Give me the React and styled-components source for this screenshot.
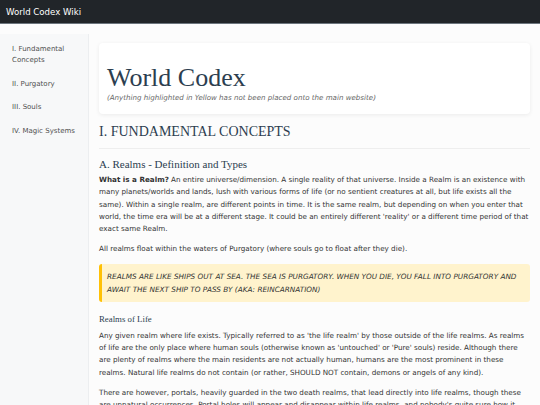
import React from "react";
import styled, { createGlobalStyle } from "styled-components";

const GlobalStyle = createGlobalStyle`
  html, body {
    margin: 0;
    padding: 0;
    background: #fcfcfc;
    font-family: "DejaVu Sans", Verdana, sans-serif;
    color: #333;
  }
`;

const Navbar = styled.header`
  height: 23px;
  background: #212529;
  border-bottom: 1px solid #6c757d;
  display: flex;
  align-items: center;
  padding: 0 6px;
  color: #fff;
  font-size: 8.6px;
`;

const Layout = styled.div`
  display: flex;
  align-items: flex-start;
`;

const Sidebar = styled.nav`
  width: 89px;
  flex-shrink: 0;
  margin-top: 10px;
  min-height: 380px;
  background: #f7f8f9;
  border-right: 1px solid #eceef0;
  padding: 10px 0 0 12px;
  box-sizing: border-box;
  display: flex;
  flex-direction: column;
  gap: 12.5px;
`;

const NavLink = styled.a`
  font-size: 7px;
  line-height: 11px;
  color: #505050;
  text-decoration: none;
  padding-right: 10px;
`;

const Main = styled.main`
  flex: 1;
  padding: 19px 10px 0 10px;
  min-width: 0;
`;

const HeaderCard = styled.div`
  background: #fff;
  border-radius: 4px;
  box-shadow: 0 1px 4px rgba(0, 0, 0, 0.07);
  padding: 20px 8px 12px;
  margin-bottom: 10px;
`;

const Title = styled.h1`
  font-family: "Liberation Serif", Georgia, serif;
  font-weight: normal;
  font-size: 26px;
  line-height: 30px;
  color: #2c3e50;
  margin: 0;
`;

const Subtitle = styled.p`
  margin: 0;
  font-size: 7.1px;
  line-height: 9px;
  font-style: italic;
  color: #666;
`;

const SectionTitle = styled.h2`
  font-family: "Liberation Serif", Georgia, serif;
  font-weight: normal;
  font-size: 14px;
  line-height: 16px;
  color: #2c3e50;
  margin: 0;
  padding-bottom: 8px;
  border-bottom: 1px solid #eee;
`;

const SubTitle = styled.h3`
  font-family: "Liberation Serif", Georgia, serif;
  font-weight: normal;
  font-size: 11px;
  line-height: 14px;
  color: #2c3e50;
  margin: 8px 0 3px;
`;

const MinorTitle = styled.h4`
  font-family: "Liberation Serif", Georgia, serif;
  font-weight: normal;
  font-size: 8.8px;
  line-height: 12px;
  color: #2c3e50;
  margin: 11px 0 5px;
`;

const Para = styled.p`
  font-size: 7.19px;
  line-height: 12.3px;
  margin: 0 0 8px;
  color: #333;
`;

const Callout = styled.blockquote`
  margin: 0;
  background: #fff3cd;
  border-left: 3px solid #ffc107;
  border-radius: 3px;
  padding: 6px 8px 6px 5px;
  font-size: 7.3px;
  line-height: 13px;
  font-style: italic;
  text-transform: uppercase;
  color: #333;
`;

export default function App() {
  return (
    <>
      <GlobalStyle />
      <Navbar>World Codex Wiki</Navbar>
      <Layout>
        <Sidebar>
          <NavLink href="#fundamental">I. Fundamental Concepts</NavLink>
          <NavLink href="#purgatory">II. Purgatory</NavLink>
          <NavLink href="#souls">III. Souls</NavLink>
          <NavLink href="#magic">IV. Magic Systems</NavLink>
        </Sidebar>
        <Main>
          <HeaderCard>
            <Title>World Codex</Title>
            <Subtitle>
              (Anything highlighted in Yellow has not been placed onto the main website)
            </Subtitle>
          </HeaderCard>
          <SectionTitle>I. FUNDAMENTAL CONCEPTS</SectionTitle>
          <SubTitle>A. Realms - Definition and Types</SubTitle>
          <Para>
            <strong>What is a Realm?</strong> An entire universe/dimension. A single
            reality of that universe. Inside a Realm is an existence with many
            planets/worlds and lands, lush with various forms of life (or no sentient
            creatures at all, but life exists all the same). Within a single realm, are
            different points in time. It is the same realm, but depending on when you
            enter that world, the time era will be at a different stage. It could be an
            entirely different 'reality' or a different time period of that exact same
            Realm.
          </Para>
          <Para>
            All realms float within the waters of Purgatory (where souls go to float
            after they die).
          </Para>
          <Callout>
            Realms are like ships out at sea. The sea is Purgatory. When you die, you
            fall into Purgatory and await the next ship to pass by (AKA: Reincarnation)
          </Callout>
          <MinorTitle>Realms of Life</MinorTitle>
          <Para>
            Any given realm where life exists. Typically referred to as 'the life realm'
            by those outside of the life realms. As realms of life are the only place
            where human souls (otherwise known as 'untouched' or 'Pure' souls) reside.
            Although there are plenty of realms where the main residents are not
            actually human, humans are the most prominent in these realms. Natural life
            realms do not contain (or rather, SHOULD NOT contain, demons or angels of
            any kind).
          </Para>
          <Para>
            There are however, portals, heavily guarded in the two death realms, that
            lead directly into life realms, though these are unnatural occurrences.
            Portal holes will appear and disappear within life realms, and nobody's
            quite sure how it happens.
          </Para>
        </Main>
      </Layout>
    </>
  );
}
